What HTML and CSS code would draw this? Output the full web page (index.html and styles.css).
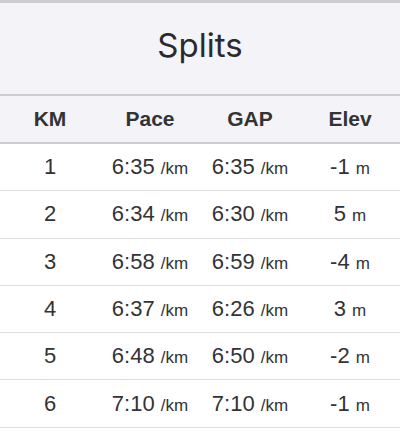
FILE: index.html
```html
<!DOCTYPE html>
<html>
<head>
<meta charset="utf-8">
<link rel="stylesheet" href="styles.css">
</head>
<body>
<div class="splits">
  <div class="title">Splits</div>
  <div class="row head">
    <div>KM</div><div>Pace</div><div>GAP</div><div>Elev</div>
  </div>
  <div class="row"><div>1</div><div>6:35 <span class="u">/km</span></div><div>6:35 <span class="u">/km</span></div><div>-1 <span class="u">m</span></div></div>
  <div class="row"><div>2</div><div>6:34 <span class="u">/km</span></div><div>6:30 <span class="u">/km</span></div><div>5 <span class="u">m</span></div></div>
  <div class="row"><div>3</div><div>6:58 <span class="u">/km</span></div><div>6:59 <span class="u">/km</span></div><div>-4 <span class="u">m</span></div></div>
  <div class="row"><div>4</div><div>6:37 <span class="u">/km</span></div><div>6:26 <span class="u">/km</span></div><div>3 <span class="u">m</span></div></div>
  <div class="row"><div>5</div><div>6:48 <span class="u">/km</span></div><div>6:50 <span class="u">/km</span></div><div>-2 <span class="u">m</span></div></div>
  <div class="row"><div>6</div><div>7:10 <span class="u">/km</span></div><div>7:10 <span class="u">/km</span></div><div>-1 <span class="u">m</span></div></div>
</div>
</body>
</html>
```
FILE: styles.css
```css
html, body {
  margin: 0;
  padding: 0;
  background: #ffffff;
}
.splits {
  width: 400px;
  font-family: "Liberation Sans", Arial, sans-serif;
  color: #333336;
  border-top: 3px solid #cdccd1;
}
.title {
  height: 93px;
  box-sizing: border-box;
  padding-bottom: 8px;
  background: #f4f3f8;
  display: flex;
  align-items: center;
  justify-content: center;
  font-family: Inter, "Liberation Sans", sans-serif;
  font-size: 33px;
  color: #2a2a2e;
  border-bottom: 2px solid #cdccd1;
}
.row {
  display: grid;
  grid-template-columns: repeat(4, 1fr);
  height: 46.3px;
  align-items: center;
  text-align: center;
  font-size: 22px;
  border-bottom: 1px solid #dddce1;
}
.row.head {
  background: #f4f3f8;
  font-weight: bold;
  font-size: 21px;
  color: #333336;
  height: 46px;
  border-bottom: 2px solid #cdccd1;
}
.u {
  font-size: 17px;
}
```
